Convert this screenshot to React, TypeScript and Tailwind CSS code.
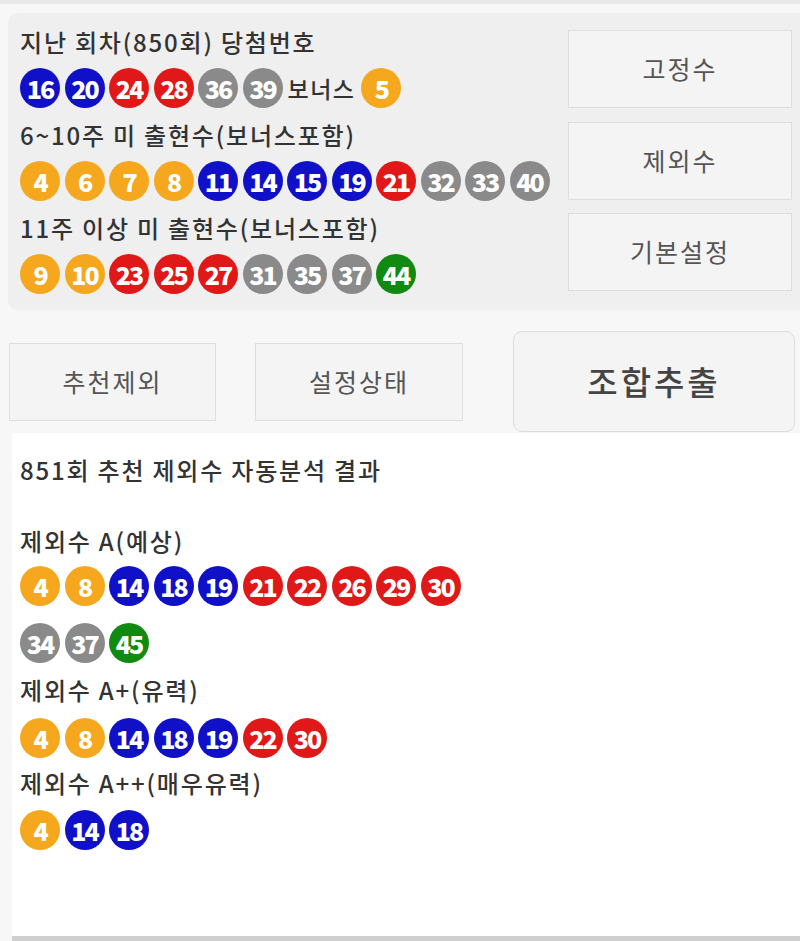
import React from 'react';

type Ball = number;

const ballColor = (n: Ball) => {
  if (n <= 10) return 'bg-[#f5a81e]';
  if (n <= 20) return 'bg-[#1010c8]';
  if (n <= 30) return 'bg-[#e01818]';
  if (n <= 40) return 'bg-[#8a8a8a]';
  return 'bg-[#108a10]';
};

const LottoBall = ({ n }: { n: Ball }) => (
  <div
    className={`${ballColor(n)} w-[40px] h-[40px] rounded-full flex items-center justify-center text-white text-[25px] font-black tracking-[-2px] leading-none shrink-0`}>
    {n}
  </div>
);

const BallRow = ({ nums, className = '' }: { nums: Ball[]; className?: string }) => (
  <div className={`flex gap-[4.5px] h-[40px] items-center ${className}`}>
    {nums.map((n) => (
      <LottoBall key={n} n={n} />
    ))}
  </div>
);

const Title = ({ children, className = '' }: { children: React.ReactNode; className?: string }) => (
  <div
    className={`h-[32px] leading-[32px] text-[24px] tracking-[1.8px] font-medium text-[#333] whitespace-nowrap ${className}`}>
    {children}
  </div>
);

const SideButton = ({ label, className = '' }: { label: string; className?: string }) => (
  <div
    className={`h-[78px] border border-[#dedede] bg-[#f4f4f4] flex items-center justify-center text-[25px] tracking-[2px] text-[#555] ${className}`}>
    {label}
  </div>
);

export default function App() {
  return (
    <div
      className="w-[800px] h-[941px] bg-[#f7f7f7] border-t-[4px] border-[#e8e8e8] flex flex-col overflow-hidden"
      style={{ fontFamily: '"Noto Sans CJK KR", "Noto Sans", sans-serif' }}>
      <div className="ml-[8px] mt-[9px] h-[297px] rounded-l-[10px] bg-[#efefef] flex">
        <div className="w-[560px] pl-[12px] pt-[13px]">
          <Title>지난 회차(850회) 당첨번호</Title>
          <div className="mt-[10px] flex items-center h-[40px]">
            <BallRow nums={[16, 20, 24, 28, 36, 39]} />
            <span className="ml-[5px] mr-[6px] text-[23px] tracking-[1.5px] font-medium text-[#333]">보너스</span>
            <LottoBall n={5} />
          </div>
          <Title className="mt-[11px]">6~10주 미 출현수(보너스포함)</Title>
          <BallRow className="mt-[10px]" nums={[4, 6, 7, 8, 11, 14, 15, 19, 21, 32, 33, 40]} />
          <Title className="mt-[11px]">11주 이상 미 출현수(보너스포함)</Title>
          <BallRow className="mt-[10px]" nums={[9, 10, 23, 25, 27, 31, 35, 37, 44]} />
        </div>
        <div className="w-[224px] pt-[17px] flex flex-col">
          <SideButton label="고정수" />
          <SideButton label="제외수" className="mt-[14px]" />
          <SideButton label="기본설정" className="mt-[13px]" />
        </div>
      </div>

      <div className="mt-[21px] flex items-center h-[101px]">
        <div className="ml-[9px] w-[207px] h-[78px] border border-[#dedede] bg-[#f4f4f4] flex items-center justify-center text-[25px] tracking-[2px] text-[#555]">
          추천제외
        </div>
        <div className="ml-[39px] w-[208px] h-[78px] border border-[#dedede] bg-[#f4f4f4] flex items-center justify-center text-[25px] tracking-[2px] text-[#555]">
          설정상태
        </div>
        <div className="ml-[50px] w-[282px] h-[101px] rounded-[9px] border border-[#dcdcdc] bg-[#f4f4f4] flex items-center justify-center text-[33px] tracking-[3px] font-medium text-[#444]">
          조합추출
        </div>
      </div>

      <div className="ml-[12px] mt-[1px] flex-1 bg-white border-b-[5px] border-[#cfcfcf] pl-[8px] pt-[21px]">
        <Title>851회 추천 제외수 자동분석 결과</Title>
        <Title className="mt-[39px]">제외수 A(예상)</Title>
        <BallRow className="mt-[9px]" nums={[4, 8, 14, 18, 19, 21, 22, 26, 29, 30]} />
        <BallRow className="mt-[17px]" nums={[34, 37, 45]} />
        <Title className="mt-[11px]">제외수 A+(유력)</Title>
        <BallRow className="mt-[12px]" nums={[4, 8, 14, 18, 19, 22, 30]} />
        <Title className="mt-[9px]">제외수 A++(매우유력)</Title>
        <BallRow className="mt-[11px]" nums={[4, 14, 18]} />
      </div>
    </div>
  );
}
